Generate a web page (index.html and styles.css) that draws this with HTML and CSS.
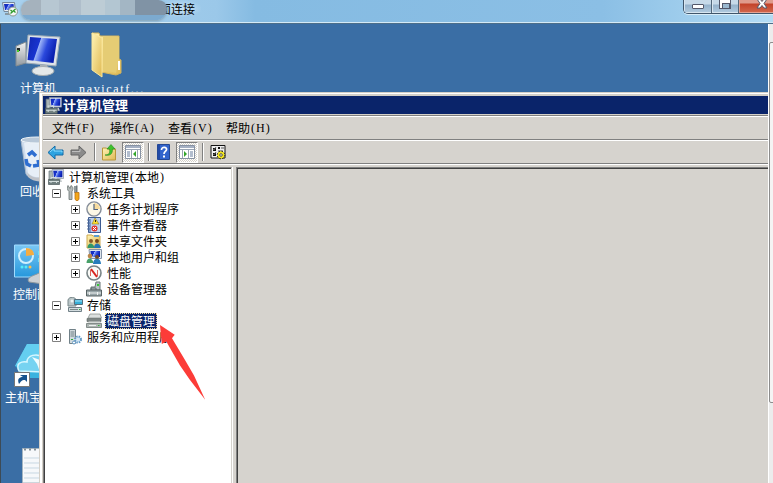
FILE: index.html
```html
<!DOCTYPE html>
<html lang="zh-CN">
<head>
<meta charset="utf-8">
<title>计算机管理</title>
<link rel="stylesheet" href="styles.css">
</head>
<body>
<svg class="defs" width="0" height="0">
  <defs>
    <linearGradient id="scr" x1="0" y1="0" x2="1" y2="0.3"><stop offset="0" stop-color="#1026b0"/><stop offset=".42" stop-color="#1834cf"/><stop offset=".45" stop-color="#9cb4f8"/><stop offset=".7" stop-color="#2a48dc"/><stop offset="1" stop-color="#0a20b0"/></linearGradient>
    <linearGradient id="metal" x1="0" y1="0" x2="0" y2="1"><stop offset="0" stop-color="#f2f2f2"/><stop offset="1" stop-color="#929aa0"/></linearGradient>
    <linearGradient id="gold" x1="0" y1="0" x2="1" y2="1"><stop offset="0" stop-color="#fff3b4"/><stop offset="1" stop-color="#dfb953"/></linearGradient>
    <linearGradient id="blue" x1="0" y1="0" x2="0" y2="1"><stop offset="0" stop-color="#7ac8f4"/><stop offset="1" stop-color="#2698dc"/></linearGradient>
    <symbol id="pc" viewBox="0 0 16 16">
      <path d="M1 2h4v9H1z" fill="#a8b4b4" stroke="#687478" stroke-width=".7"/>
      <path d="M4 .5h11.5v9H5z" fill="#e0e4ea" stroke="#8790a0" stroke-width=".7"/><path d="M5.2 1.7h9.2v6.6H6z" fill="url(#scr)"/>
      <path d="M8 10h5l1 3H8z" fill="#c4cacc"/><path d="M.5 10.5h11v5H.5z" fill="#718080" stroke="#4e5a5c" stroke-width=".7"/><path d="M3 10V8.5h5V10M1 12.5h10M3 12v2M8.5 12v2" fill="none" stroke="#d4dddd"/>
    </symbol>
    <symbol id="expand" viewBox="0 0 9 9"><path d="M.5.5h8v8h-8z" fill="#fff" stroke="#808080"/><path d="M2 4.5h5M4.5 2v5" stroke="#000"/></symbol>
    <symbol id="collapse" viewBox="0 0 9 9"><path d="M.5.5h8v8h-8z" fill="#fff" stroke="#808080"/><path d="M2 4.5h5" stroke="#000"/></symbol>
  </defs>
</svg>

<header class="remote-bar">
  <svg class="remote-icon" width="16" height="16" viewBox="0 0 16 16"><path d="M.5 1.5h12l1 9H2z" fill="#e7eef5" stroke="#75879a"/><path d="M2 3h9.500l.7 6H3z" fill="url(#scr)"/><path d="M3 12h5v2H3z" fill="#8999a4"/><circle cx="11" cy="10.500" r="4.500" fill="#f4f6f4" stroke="#8a9790"/><path d="M8.500 9l2 1.800-2 1.700M13.500 8l-2 1.800 2 1.700" fill="none" stroke="#2a9a26" stroke-width="1.300"/></svg>
  <div class="remote-title">面连接</div>
  <div class="redaction"></div>
  <div class="win-buttons">
    <span class="wb min"><i></i></span><span class="wb max"><i></i></span>
    <span class="wb close"><svg width="12" height="10" viewBox="0 0 12 10"><path d="M1 0h3l2 2.500L8 0h3L8 4.500 11 9H8L6 6.500 4 9H1l3-4.500z" fill="#fff" stroke="#54586a"/></svg></span>
  </div>
</header>

<div class="body">
<main class="desktop">
  <div class="shortcut computer">
    <svg width="46" height="43" viewBox="0 0 46 43"><path d="M1 12l10-4v21L1 32z" fill="url(#metal)" stroke="#808a90"/><path d="M2 14h3v3H2z" fill="#242c2a"/><path d="M2 16h2v2H2z" fill="#45cf28"/><path d="M13 1l32 2-4 29-30-3z" fill="#dde3e8" stroke="#9ba9b5"/><path d="M15 3l27 2-3.500 24-26-3z" fill="url(#scr)"/><path d="M25 31h7l1 4h-8z" fill="#abb3b8"/><ellipse cx="28" cy="37" rx="11" ry="4.500" fill="#e4e8e9" stroke="#a4acb0"/></svg>
    <span>计算机</span>
  </div>
  <div class="shortcut folder">
    <svg width="32" height="46" viewBox="0 0 32 46"><path d="M1 1h7l1 3h19v23l2 1v13l-5 2-15-3z" fill="url(#gold)" stroke="#d2b35c"/><path d="M12 5h16v22l-3 14-13-3z" fill="#e5cc74"/><path d="M1 1l10 5v39L1 38z" fill="url(#gold)" stroke="#fbe79b"/><path d="M28 29v9" stroke="#fff" stroke-width="2"/></svg>
    <span class="ascii">navicatf...</span>
  </div>
  <div class="shortcut recycle">
    <svg width="34" height="46" viewBox="0 0 34 46"><path d="M1 4l5 34c3 6 18 7 23 1l4-35z" fill="#cfdded" stroke="#a6b7cb"/><path d="M4 7l4 30c4 4 9 5 13 4V7z" fill="#e7eff7"/><path d="M7 36c3 5 12 8 20 3l-2 5c-5 3-13 1-17-3z" fill="#bfc3c9"/><ellipse cx="17" cy="4" rx="16" ry="3" fill="#b8c8d8" stroke="#eef4f8"/><path d="M8 19l4-3 4 4M6 23l1 5 4 2M13 30l6-1-1-5" fill="none" stroke="#2e6ed0" stroke-width="3.500"/></svg>
    <span>回收站</span>
  </div>
  <div class="shortcut control">
    <svg width="38" height="40" viewBox="0 0 38 40"><path d="M.5 1h36v32H.5z" fill="url(#blue)" stroke="#a0dcff"/><circle cx="12" cy="12" r="7" fill="none" stroke="#d0effd" stroke-width="2"/><path d="M12 12V4c5 0 8 3 8 7z" fill="#f5ac3f"/><path d="M24 7h4v4h-4zM24 14h4v4h-4z" fill="#69ddf2"/><circle cx="8" cy="23" r="1.500" fill="#54ecfa"/><circle cx="12" cy="23" r="1.500" fill="#54ecfa"/><circle cx="16" cy="23" r="1.500" fill="#ffbd4b"/><path d="M15 38c-3-4 3-6 8-8l6-3v13z" fill="#ccd0d3" stroke="#8d989e"/></svg>
    <span>控制面板</span>
  </div>
  <div class="shortcut host">
    <svg width="44" height="46" viewBox="0 0 44 46"><path d="M13 1h28v34H14L1 23z" fill="#39b2df"/><path d="M13 1h20v13L1 23z" fill="#64cef0"/><path d="M5 28c-4-8 3-10 8-9 0-7 10-9 15-5v15z" fill="#76d3f1" stroke="#d5f7ff" stroke-width="1.500"/><path d="M18 14l8 3v12l-3-8z" fill="#f1fdff"/><path d="M.5 29.500h15v14H.5z" fill="#fff" stroke="#777"/><path d="M5 41c-2-5 0-7 4-7l-3-2h7v7l-2-2c-4 0-4 2-6 4z" fill="#17528d"/></svg>
    <span>主机宝</span>
  </div>
  <svg class="notepad" width="18" height="36" viewBox="0 0 18 36"><path d="M.5 1.500H18V36H.5z" fill="#f6f8fa" stroke="#a4b5c1"/><path d="M2 11h16M2 16h16M2 21h16M2 26h16M2 31h16" stroke="#c7d7e2"/><path d="M2 2.500h16" stroke="#849098" stroke-width="2" stroke-dasharray="2 3"/></svg>

  <section class="mmc">
    <div class="mmc-inner">
    <div class="mmc-title"><svg width="17" height="17"><use href="#pc"/></svg><b>计算机管理</b></div>
    <nav class="menu">
      <span>文件<i>(F)</i></span><span>操作<i>(A)</i></span><span>查看<i>(V)</i></span><span>帮助<i>(H)</i></span>
    </nav>
    <div class="toolbar">
      <svg width="17" height="15" viewBox="0 0 17 15"><path d="M1 7.500L8 1v4h8v5H8v4z" fill="#2da3e0" stroke="#126ba6"/><path d="M3 7l4-3.500V6h8v1.500" fill="none" stroke="#8bdfff"/></svg>
      <svg class="forward" width="17" height="15" viewBox="0 0 17 15"><path d="M16 7.500L9 1v4H1v5h8v4z" fill="#8b8b8b" stroke="#656565"/><path d="M2 6.500h8V4" fill="none" stroke="#bebebe"/></svg>
      <span class="sep s1"></span>
      <svg class="up" width="16" height="17" viewBox="0 0 16 17"><path d="M1.500 4h4l1 1h8v11h-13z" fill="url(#gold)" stroke="#b9963b"/><path d="M4 11c5 0 5-3 4.500-6H6l4-4.500L14 5h-2.500c0 5-2 7-7.500 6z" fill="#3fc22c" stroke="#248a20" stroke-width=".6"/></svg>
      <span class="pressed p1"><svg width="16" height="14" viewBox="0 0 16 14"><path d="M.5.5h15v13H.5z" fill="#fff" stroke="#8792a3"/><path d="M1 2h14" stroke="#a6b1c4" stroke-width="2"/><path d="M1 4.500h14M6.500 5v8M12.500 5v8" stroke="#9aa5b5"/><path d="M2 7h3M2 9h3M2 11h3" stroke="#667c9e"/><path d="M11 6v6L8 9z" fill="#32a52a"/></svg></span>
      <span class="sep s2"></span>
      <svg class="help" width="13" height="16" viewBox="0 0 13 16"><path d="M.5.500h12v15H.5z" fill="#3264cc" stroke="#244895"/><path d="M1 1h2v14H1z" fill="#234ba7"/><path d="M4.500 6c0-4 6-3 5-.3C9 7.500 7 7.500 7 10" fill="none" stroke="#fff" stroke-width="1.700"/><path d="M6 11.500h2v2H6z" fill="#fff"/></svg>
      <span class="pressed p2"><svg width="16" height="14" viewBox="0 0 16 14"><path d="M.5.5h15v13H.5z" fill="#fff" stroke="#8792a3"/><path d="M1 2h14" stroke="#a6b1c4" stroke-width="2"/><path d="M1 4.500h14M3.500 5v8M9.500 5v8" stroke="#9aa5b5"/><path d="M11 7h3M11 9h3M11 11h3" stroke="#667c9e"/><path d="M5 6v6l3-3z" fill="#32a52a"/></svg></span>
      <span class="sep s3"></span>
      <svg class="settings" width="17" height="17" viewBox="0 0 17 17"><path d="M1 1.500h14V14H1z" fill="#eee" stroke="#111"/><path d="M3 4h3v3H3zM3 9h3v3H3zM8 3h2v2H8z" fill="#111"/><path d="M3 5l1 1 2-3M3 10l1 1 2-3M11 4h3M8 7h5" stroke="#555" fill="none"/><circle cx="11" cy="11" r="3.800" fill="#f4e51c" stroke="#111" stroke-width="1" stroke-dasharray="1.500 1.500"/><circle cx="11" cy="11" r="1.300" fill="#fff" stroke="#554"/></svg>
    </div>
    <div class="workspace">
      <div class="tree">
        <div class="row root"><svg class="ico" viewBox="0 0 16 16"><use href="#pc"/></svg><span>计算机管理<i class="paren">(</i>本地<i class="paren">)</i></span></div>
        <div class="row one"><svg class="box"><use href="#collapse"/></svg><svg class="ico" viewBox="0 0 16 16"><path d="M1 .5l2 3 1-3c3 2 2 4 1 6v8H2v-8C0 5 0 2 1 .5z" fill="#b4bab9" stroke="#6b7573" stroke-width=".8"/><path d="M7 1h2v7H7z" fill="#90999b"/><path d="M9 .5h1.500v7H9z" fill="#6f797d"/><path d="M8 7.500h4V14l-1 1.500H9L8 14z" fill="#f3a719" stroke="#bd7112" stroke-width=".8"/></svg><span>系统工具</span></div>
        <div class="row two"><svg class="box"><use href="#expand"/></svg><svg class="ico" viewBox="0 0 16 16"><circle cx="8" cy="8" r="7.100" fill="#fcf7e6" stroke="#858d99" stroke-width="1.400"/><path d="M8 2v6h6A6 6 0 0 0 8 2" fill="#f8db9c"/><path d="M8 3v5.500h4" fill="none" stroke="#52647f" stroke-width="1.200"/></svg><span>任务计划程序</span></div>
        <div class="row two"><svg class="box"><use href="#expand"/></svg><svg class="ico" viewBox="0 0 16 16"><path d="M2.500.5h12v15h-12z" fill="#bdd1ed" stroke="#3d5b91"/><path d="M3 2h2v13H3z" fill="#7f9cc9"/><path d="M1 3h3M1 6h3M1 9h3M1 12h3" stroke="#506c9c"/><path d="M9 1l4 6H6z" fill="#ffe331" stroke="#8f7623" stroke-width=".6"/><path d="M9.500 3v2" stroke="#222"/><circle cx="8.500" cy="11.500" r="3" fill="#e0352d"/><path d="M7 10l3 3M10 10l-3 3" stroke="#fff"/></svg><span>事件查看器</span></div>
        <div class="row two"><svg class="box"><use href="#expand"/></svg><svg class="ico" viewBox="0 0 16 16"><path d="M1 2h5l1 1h7v12H1z" fill="url(#gold)" stroke="#cda84e"/><path d="M8 3h5" stroke="#5b9dcc" stroke-width="2"/><circle cx="5" cy="8" r="2" fill="#895b2c"/><circle cx="11" cy="8" r="2" fill="#75461d"/><path d="M1.500 15c0-6 6-6 7 0z" fill="#329869"/><path d="M8 15c0-6 6-6 7 0z" fill="#2876b4"/></svg><span>共享文件夹</span></div>
        <div class="row two"><svg class="box"><use href="#expand"/></svg><svg class="ico" viewBox="0 0 16 16"><path d="M3 .5h12.500v9H4z" fill="#dde5ec" stroke="#8593a7"/><path d="M4.500 2H14v6H5z" fill="url(#scr)"/><circle cx="4" cy="7" r="2.300" fill="#ba874b"/><path d="M.5 14c0-6 6-6 7 0z" fill="#47a068"/><circle cx="11" cy="8" r="2" fill="#714722"/><path d="M7 15c0-7 8-7 8 0z" fill="#287dbc"/></svg><span>本地用户和组</span></div>
        <div class="row two"><svg class="box"><use href="#expand"/></svg><svg class="ico" viewBox="0 0 16 16"><circle cx="8" cy="8" r="7" fill="#fbfbf8" stroke="#788486" stroke-width="1.600"/><path d="M4.500 11V5M11.500 11V5" stroke="#d96860" stroke-width="1" fill="none"/><path d="M5 4l6 8" stroke="#d9251d" stroke-width="2"/></svg><span>性能</span></div>
        <div class="row two"><svg class="ico lone" viewBox="0 0 16 16"><path d="M5 6h4l1-5h4v8H5z" fill="#b6c1c4" stroke="#697577"/><path d="M11 3h2v2h-2z" fill="#38c737"/><path d="M5 9V7h5v2" fill="none" stroke="#5d6a6c"/><path d="M.5 9h15v6H.5z" fill="#98a5a8" stroke="#586365"/><path d="M1 12h14M3.500 11v3M11.500 11v3" stroke="#eff2f2"/></svg><span>设备管理器</span></div>
        <div class="row one"><svg class="box"><use href="#collapse"/></svg><svg class="ico" viewBox="0 0 16 16"><path d="M1 3c1-4 8-3 8 0v6H1z" fill="#bac5c7" stroke="#78878a"/><circle cx="5" cy="4" r="1.500" fill="#eef5f4"/><path d="M7.500 2.500h8v5h-8z" fill="#37afd7" stroke="#546f7d"/><path d="M8 4h7" stroke="#a9e5f8"/><path d="M1.500 10.500h13v4h-13z" fill="#d3dcdf" stroke="#718087"/><path d="M3 12.500h8" stroke="#7c8989"/><path d="M12 12h1.500v1H12z" fill="#25b537"/></svg><span>存储</span></div>
        <div class="row two selected"><svg class="ico lone" viewBox="0 0 16 16"><path d="M4 1h10l1.500 4H2z" fill="#dce0df" stroke="#8d9492" stroke-width=".8"/><path d="M1 5.500h14v3H1z" fill="#7e8685" stroke="#586260" stroke-width=".6"/><path d="M3 8.500h11l1.500 2H.5z" fill="#d6dad8"/><path d="M.5 10.500h15v4H.5z" fill="#adb5b2" stroke="#6e7977" stroke-width=".8"/><path d="M3 12.500h7" stroke="#edf0ef"/><path d="M12 12h1.500v1H12z" fill="#35b53b"/></svg><span>磁盘管理</span></div>
        <div class="row one"><svg class="box"><use href="#expand"/></svg><svg class="ico" viewBox="0 0 16 16"><path d="M2.500.5h6v14h-6z" fill="#d1dadd" stroke="#718188"/><path d="M3.500 3h4M3.500 5h4M3.500 7h4" stroke="#718188"/><path d="M4 10h2v1H4z" fill="#28a939"/><circle cx="11" cy="10.500" r="3" fill="#d3e6f5" stroke="#6298c4" stroke-width="2" stroke-dasharray="1.400 1"/><circle cx="7" cy="13.500" r="1.500" fill="#fff" stroke="#6298c4"/></svg><span>服务和应用程序</span></div>
      </div>
      <div class="pane"></div>
    </div>
    </div>
  </section>
</main>
<aside class="scrollbar"><div class="thumb"></div></aside>
</div>
<svg class="arrow" width="46" height="76" viewBox="0 0 46 76"><path d="M0 0L14.700 9.700 12 13.300 25.300 35.500 34 50.500 45.200 74.700 30 55 20 40.500 6.300 16.500 1.800 19z" fill="#fc3c38"/></svg>
</body>
</html>
```
FILE: styles.css
```css
* { box-sizing: border-box; }
body { margin: 0; width: 773px; height: 483px; overflow: hidden; position: relative; display: flex; flex-direction: column; font: 12px/16px "Noto Sans CJK SC", sans-serif; color: #000; }
svg { display: block; flex: none; }
.defs { position: absolute; }
i { font: 12px/16px "Liberation Serif", serif; letter-spacing: 1px; padding-left: 1px; }
.remote-bar { height: 24px; flex: none; position: relative; background: linear-gradient(90deg, #a9d2ef, #9bc8e9 28%, #85bbe2 33%, #8bbfe5 78%, #b4dcf4); border-bottom: 1px solid #4d6f8a; box-shadow: inset 0 -1px #d5eaf6; }
.remote-icon { position: absolute; left: 2px; top: 1px; }
.remote-title { position: absolute; left: 159px; top: 0; height: 17px; line-height: 17px; font-size: 12px; padding-right: 6px; background: radial-gradient(ellipse, #c7e2f4, transparent 75%); }
.redaction { position: absolute; left: 21px; top: 0; width: 146px; height: 20px; border-radius: 10px 9px 12px 10px; background: linear-gradient(180deg, transparent 15px, #7caacf 15px), linear-gradient(90deg, #a5b2bd 20px, #b7c7d2 20px 38px, #afbecb 38px 60px, #bdccd5 60px 84px, #b3c6d2 84px 99px, #a3b6c4 99px 114px, #8093a5 114px); box-shadow: 0 1px 3px #819cae; }
.win-buttons { position: absolute; left: 683px; top: 0; width: 90px; height: 14px; display: flex; border: 1px solid #40566b; border-top: 0; border-right: 0; border-radius: 0 0 0 5px; overflow: hidden; box-shadow: 0 1px #d9edf8; }
.wb { width: 28px; background: linear-gradient(#c6d9e8 0 4px, #94b1ca 5px, #b2cce0); border-right: 1px solid #52677a; box-shadow: inset 1px -1px #d8e6f0; position: relative; flex: none; }
.wb i { padding: 0; }
.max { width: 27px; }
.close { width: 35px; background: linear-gradient(#df9b8c 0 3px, #c34229 4px, #d26a4f); box-shadow: inset 1px -1px #e6a393; }
.min i { position: absolute; left: 8px; top: 4px; width: 12px; height: 5px; background: #fff; border: 1px solid #54586a; border-radius: 1px; }
.max i { position: absolute; left: 7px; top: -1px; width: 12px; height: 10px; background: #fff; border: 1px solid #54586a; }
.max i::after { content: ""; position: absolute; left: 2px; top: 3px; width: 6px; height: 4px; border: 1px solid #54586a; background: #9bb9d0; }
.close svg { position: absolute; left: 17px; top: -1px; }
.body { display: flex; height: 459px; }
.desktop { width: 768px; position: relative; overflow: hidden; background: #3a6ea5; border-left: 1px solid #3d4b56; }
.shortcut { position: absolute; display: flex; flex-direction: column; align-items: center; color: #fff; white-space: nowrap; }
.shortcut span { line-height: 16px; }
.computer { left: 14px; top: 10px; }
.computer span { margin-top: 3px; }
.folder { left: 78px; top: 8px; align-items: flex-start; }
.folder svg { margin-left: 12px; }
.folder .ascii { font: 12px/14px "Liberation Serif", serif; letter-spacing: 1.650px; margin-top: 4px; }
.recycle { left: 19px; top: 112px; align-items: flex-start; }
.recycle span { margin-top: 1px; }
.control { left: 12px; top: 220px; align-items: flex-start; }
.control svg { margin-left: 1px; }
.control span { margin-top: 2px; }
.host { left: 4px; top: 319px; align-items: flex-start; }
.host svg { margin-left: 9px; }
.notepad { position: absolute; left: 21px; top: 423px; }
.mmc { position: absolute; left: 38px; top: 68px; width: 729px; height: 391px; background: #d4d0c8; border-left: 1px solid #d4d0c8; border-top: 1px solid #d4d0c8; box-shadow: inset 2px 1px #fff; }
.mmc-inner { padding: 3px 0 0 3px; height: 390px; display: flex; flex-direction: column; }
.mmc-title { height: 18px; flex: none; background: #0a246a; display: flex; align-items: center; color: #fff; padding-left: 2px; }
.mmc-title b { font-size: 13px; line-height: 18px; margin-left: 1px; }
.menu { height: 25px; flex: none; margin-top: 1px; border-top: 1px solid #808080; border-bottom: 1px solid #808080; box-shadow: inset 0 1px #fff; background: #d6d3ce; display: flex; align-items: flex-start; padding: 4px 0 0 9px; gap: 16px; }
.menu span { display: flex; width: 42px; height: 18px; white-space: nowrap; }
.toolbar { height: 24px; flex: none; border-top: 1px solid #fff; border-bottom: 1px solid #808080; background: #d6d3ce; display: flex; align-items: center; padding-left: 4px; }
.forward { margin-left: 6px; }
.sep { width: 2px; height: 18px; background: #808080; border-right: 1px solid #fff; }
.s1 { margin-left: 7px; }
.up { margin-left: 5px; }
.pressed { width: 22px; height: 21px; border: 1px solid #808080; border-right-color: #fff; border-bottom-color: #fff; background: repeating-conic-gradient(#fff 0 25%, #d4d0c8 0 50%) 0 0 / 2px 2px; display: flex; align-items: center; justify-content: center; }
.p1 { margin-left: 5px; }
.s2 { margin-left: 4px; }
.help { margin-left: 7px; }
.p2 { margin-left: 6px; }
.s3 { margin-left: 4px; }
.settings { margin-left: 6px; }
.workspace { border-top: 1px solid #fff; padding-top: 2px; flex: 1; display: flex; gap: 4px; background: #d6d3ce; }
.tree { width: 189px; border-left: 1px solid #808080; border-top: 1px solid #808080; border-right: 1px solid #d6d3ce; box-shadow: inset 1px 1px #404040, 1px 0 #fff; background: #fff; padding: 1px 0 0 1px; }
.row { height: 16px; display: flex; align-items: center; white-space: nowrap; }
.row span { display: flex; line-height: 16px; margin-left: 4px; }
.row .paren { width: 6px; padding-left: 1px; letter-spacing: 0; }
.box { width: 9px; height: 9px; }
.ico { width: 16px; height: 16px; }
.root { padding-left: 3px; }
.root span { margin-left: 5px; }
.one { padding-left: 7px; }
.one .ico { margin-left: 6px; }
.two { padding-left: 26px; }
.two .ico { margin-left: 6px; }
.two .lone { margin-left: 15px; }
.two span { margin-left: 5px; }
.row.selected span { margin-left: 3px; padding: 0 1px; height: 16px; line-height: 14px; color: #fff; background: #0a246a; border: 1px dotted #f5db95; }
.pane { flex: 1; background: #d6d3ce; border-left: 1px solid #808080; border-top: 1px solid #808080; box-shadow: inset 1px 1px #404040; }
.scrollbar { width: 5px; background: #ececec; border-left: 1px solid #fff; padding-top: 18px; }
.thumb { height: 361px; width: 8px; background: #f4f4f4; border: 1px solid #8c8c8c; border-radius: 2px; }
.arrow { position: absolute; left: 160px; top: 325px; }
```
